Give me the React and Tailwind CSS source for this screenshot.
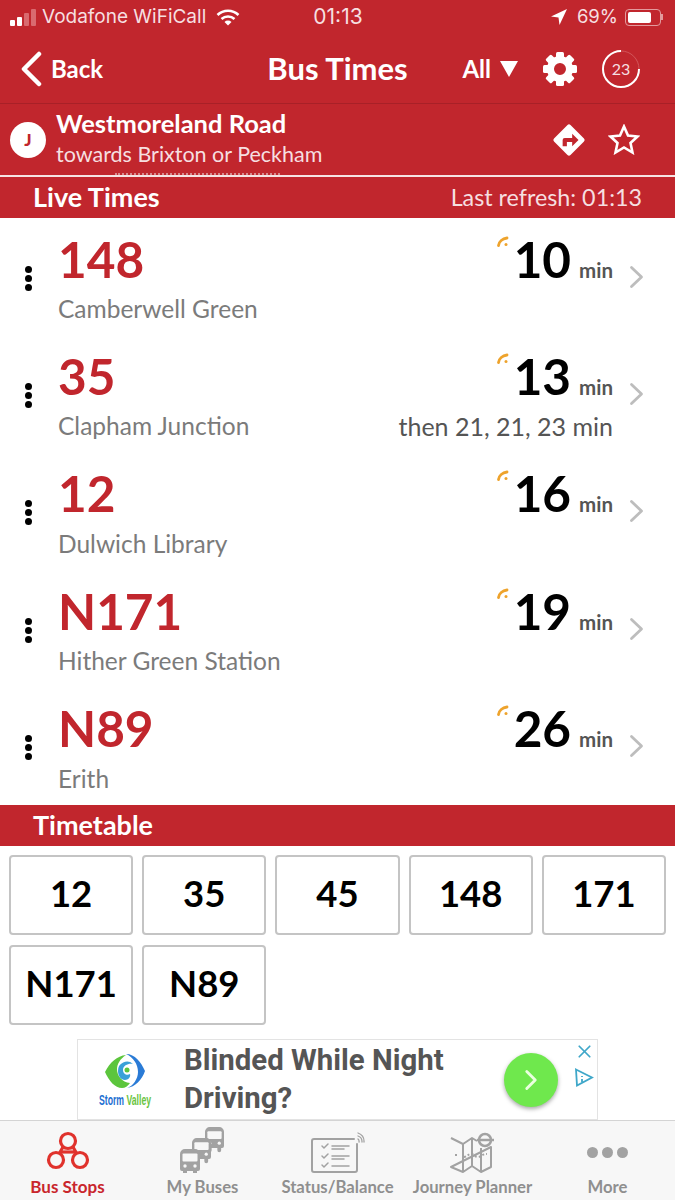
import { ChevronRight, X } from "lucide-react"

const departures = [
    { route: "148", dest: "Camberwell Green", mins: "10" },
    { route: "35", dest: "Clapham Junction", mins: "13", then: "then 21, 21, 23 min" },
    { route: "12", dest: "Dulwich Library", mins: "16" },
    { route: "N171", dest: "Hither Green Station", mins: "19" },
    { route: "N89", dest: "Erith", mins: "26" },
]

const routes = ["12", "35", "45", "148", "171", "N171", "N89"]

function Gear() {
    const teeth = [0, 45, 90, 135, 180, 225, 270, 315]
    return (
        <svg width="36" height="36" viewBox="0 0 36 36">
            {teeth.map(a => <rect key={a} x="14" y="1" width="8" height="8" rx="1.5" fill="white" transform={`rotate(${a} 18 18)`} />)}
            <circle cx="18" cy="18" r="9.5" fill="none" stroke="white" strokeWidth="7" />
        </svg>
    )
}

function Signal() {
    return (
        <svg width="12" height="12" viewBox="0 0 12 12" fill="none" stroke="#eea32c" strokeLinecap="round">
            <path d="M1.500 9.500C2 5.500 5.500 2.500 10 2" strokeWidth="2.800" />
            <circle cx="9" cy="8.500" r="1.500" fill="#eea32c" stroke="none" />
        </svg>
    )
}

function BusStopsIcon() {
    return (
        <svg width="44" height="42" viewBox="0 0 44 42" fill="none" stroke="#e0322c" strokeWidth="3.2">
            <path d="M15 21h14" />
            <path d="M17 16l-4 7M27 16l4 7" />
            <circle cx="22" cy="10" r="7.5" />
            <circle cx="10" cy="29" r="7.5" />
            <circle cx="34" cy="29" r="7.5" />
        </svg>
    )
}

function Bus({ x, y, s }) {
    return (
        <g transform={`translate(${x} ${y}) scale(${s})`}>
            <path d="M0 5a5 5 0 0 1 5-5h10a5 5 0 0 1 5 5v15a2 2 0 0 1-2 2h-1v2.500a2 2 0 0 1-4 0V22H7v2.500a2 2 0 0 1-4 0V22H2a2 2 0 0 1-2-2z" fill="#a2a2a2" />
            <rect x="2.500" y="4.500" width="15" height="8" rx="1" fill="#f7f7f7" />
            <circle cx="5" cy="17" r="1.700" fill="#f7f7f7" />
            <circle cx="15" cy="17" r="1.700" fill="#f7f7f7" />
        </g>
    )
}

function BusesIcon() {
    return (
        <svg width="46" height="46" viewBox="0 0 46 46">
            <Bus x="25" y="0" s="0.95" />
            <Bus x="12" y="11" s="0.95" />
            <Bus x="0" y="22" s="1" />
        </svg>
    )
}

function StatusIcon() {
    return (
        <svg width="54" height="42" viewBox="0 0 54 42" fill="none" stroke="#a2a2a2" strokeLinecap="round">
            <path d="M43 8H3a2 2 0 0 0-2 2v29a2 2 0 0 0 2 2h41a2 2 0 0 0 2-2V13" strokeWidth="2" />
            <path d="M11 15l2 2 4-4M11 25l2 2 4-4M11 34l2 2 4-4" strokeWidth="1.500" />
            <path d="M21 15h17M21 18h12M21 25h17M21 28h12M21 35h17" strokeWidth="1.500" />
            <path d="M47 8a3 3 0 0 1 1 3M47 5a6 6 0 0 1 4 6M47 2a9 9 0 0 1 6 9" strokeWidth="1.300" />
        </svg>
    )
}

function MapIcon() {
    return (
        <svg width="46" height="42" viewBox="0 0 46 42" fill="none" stroke="#a2a2a2" strokeWidth="2">
            <path d="M1 7l12 6 9-6 5 3M41 16v20l-10 5-9-6-9 6-12-5z" strokeLinejoin="round" />
            <path d="M13 13v28M22 7v28M31 17v24" />
            <path d="M5 24h4M14 26c3 0 4-3 7-3s4 3 7 3 4-3 9-3" strokeDasharray="2 2" />
            <circle cx="35" cy="9" r="6" strokeWidth="2.500" />
            <path d="M27 9h17" strokeWidth="2.500" />
        </svg>
    )
}

function MoreIcon() {
    return (
        <div className="flex gap-[4px] h-[42px] items-center pt-[2px]">
            <div className="w-[11px] h-[11px] rounded-full bg-[#a2a2a2]"></div>
            <div className="w-[11px] h-[11px] rounded-full bg-[#a2a2a2]"></div>
            <div className="w-[11px] h-[11px] rounded-full bg-[#a2a2a2]"></div>
        </div>
    )
}

const tabs = [
    { label: "Bus Stops", icon: <BusStopsIcon />, active: true },
    { label: "My Buses", icon: <BusesIcon /> },
    { label: "Status/Balance", icon: <StatusIcon /> },
    { label: "Journey Planner", icon: <MapIcon /> },
    { label: "More", icon: <MoreIcon /> },
]

function StatusBar() {
    return (
        <div className="h-[34px] pl-[10px] pr-[12px] grid grid-cols-[1fr_auto_1fr] items-center text-[#f6dfe0] font-['Inter',sans-serif]">
            <div className="flex items-center">
                <div className="flex items-end gap-[2px] h-[17px] mr-[6px]">
                    <div className="w-[5px] h-[6px] rounded-[1px] bg-white"></div>
                    <div className="w-[5px] h-[9px] rounded-[1px] bg-white"></div>
                    <div className="w-[5px] h-[13px] rounded-[1px] bg-[#d96a6f]"></div>
                    <div className="w-[5px] h-[17px] rounded-[1px] bg-[#d96a6f]"></div>
                </div>
                <span className="text-[19px] whitespace-nowrap">Vodafone WiFiCall</span>
                <svg className="ml-[10px]" width="24" height="17" viewBox="0 0 24 17" fill="none" stroke="white" strokeWidth="2.600">
                    <path d="M1.500 6a15 15 0 0 1 21 0M5.500 10a9.500 9.500 0 0 1 13 0" />
                    <path d="M12 16.500l-3.500-3.500a5 5 0 0 1 7 0z" fill="white" stroke="none" />
                </svg>
            </div>
            <span className="text-[21px] ml-[3px]">01:13</span>
            <div className="flex items-center justify-end">
                <svg width="16" height="16" viewBox="0 0 16 16"><path d="M16 0L0 7.500l7.500 1 1 7.500z" fill="white" /></svg>
                <span className="ml-[10px] text-[18.500px]">69%</span>
                <div className="ml-[7px] w-[36px] h-[17px] rounded-[4px] border border-[#e39a9d] p-[2px]">
                    <div className="w-[23px] h-full rounded-[2px] bg-white"></div>
                </div>
                <div className="w-[2px] h-[6px] bg-[#e39a9d]"></div>
            </div>
        </div>
    )
}

function NavBar() {
    return (
        <div className="h-[70px] grid grid-cols-[1fr_auto_1fr] items-center border-b border-[#a82027] font-['Lato',sans-serif] text-white">
            <div className="flex items-center pl-[20px]">
                <svg width="23" height="36" viewBox="0 0 23 36" fill="none" stroke="white" strokeWidth="4.500" strokeLinecap="round" strokeLinejoin="round">
                    <path d="M19 3L4 18l15 15" />
                </svg>
                <span className="ml-[8px] text-[24px] font-bold pt-[1px]">Back</span>
            </div>
            <span className="text-[31px] font-bold -mt-[1px]">Bus Times</span>
            <div className="flex items-center justify-end pr-[35px]">
                <span className="text-[24px] font-bold">All</span>
                <div className="ml-[9px] w-0 h-0 border-l-[9px] border-r-[9px] border-t-[16px] border-l-transparent border-r-transparent border-t-white"></div>
                <div className="ml-[24px]"><Gear /></div>
                <div className="relative ml-[24px] w-[38px] h-[38px] flex items-center justify-center">
                    <svg className="absolute inset-0" width="38" height="38" viewBox="0 0 38 38" fill="none">
                        <circle cx="19" cy="19" r="18" stroke="#d2555a" strokeWidth="1" />
                        <path d="M19 1A18 18 0 1 0 37 19" stroke="white" strokeWidth="2" />
                    </svg>
                    <span className="text-[16px] text-[#f6dfe0]">23</span>
                </div>
            </div>
        </div>
    )
}

function StopHeader() {
    return (
        <div className="h-[71px] flex items-center pl-[10px] pr-[35px] text-white font-['Lato',sans-serif]">
            <div className="w-[36px] h-[36px] rounded-full bg-white flex items-center justify-center text-[#c1262d] text-[17px] font-black">J</div>
            <div className="ml-[10px] flex-1">
                <p className="text-[25.500px] font-bold leading-[32px] -mt-[3px]">Westmoreland Road</p>
                <p className="text-[21.500px] leading-[30px] text-[#f6dfe0]">towards Brixton or Peckham</p>
            </div>
            <svg className="mr-[-1px]" width="36" height="36" viewBox="0 0 34 34">
                <rect x="6" y="6" width="22" height="22" rx="2" fill="white" transform="rotate(45 17 17)" />
                <path d="M11 23v-6a2 2 0 0 1 2-2h7v-4l6 6-6 6v-4h-5v4z" fill="#c1262d" />
            </svg>
            <svg className="ml-[22px]" width="32" height="31" viewBox="0 0 32 31" fill="none" stroke="white" strokeWidth="2.600" strokeLinejoin="miter">
                <path d="M16 2.500l4 9 9.500 1-7 6.500 2 9.500-8.500-5-8.500 5 2-9.500-7-6.500 9.500-1z" />
            </svg>
        </div>
    )
}

function Divider() {
    return (
        <div className="relative h-[2px] bg-[#f6e3e3]">
            <div className="absolute left-[115px] top-[-2px] w-[165px] h-[2px] border-t-2 border-dotted border-[#d98a8e]"></div>
        </div>
    )
}

function SectionBar({ title, right }) {
    return (
        <div className="h-[41px] bg-[#c1262d] flex items-center justify-between pl-[33px] pr-[33px] font-['Lato',sans-serif] text-white">
            <span className="text-[27px] font-bold">{title}</span>
            {right && <span className="text-[23.300px] text-[#f6dfe0]">{right}</span>}
        </div>
    )
}

function DepartureRow({ item }) {
    return (
        <div className="h-[117.4px] flex items-start pl-[25px] pr-[33px] pt-[15.5px] font-['Lato',sans-serif]">
            <div className="mt-[32px] w-[7px] flex flex-col gap-[2px] shrink-0">
                <div className="w-[7px] h-[7px] rounded-full bg-black"></div>
                <div className="w-[7px] h-[7px] rounded-full bg-black"></div>
                <div className="w-[7px] h-[7px] rounded-full bg-black"></div>
            </div>
            <div className="ml-[26px] flex-1">
                <p className="text-[49.500px] leading-[50px] font-bold text-[#c1262d]">{item.route}</p>
                <p className="mt-[10.500px] text-[24.500px] leading-[30px] text-[#7b7b7b]">{item.dest}</p>
            </div>
            <div className="flex flex-col items-end">
                <div className="flex items-baseline h-[50px]">
                    <div className="self-start mt-[2px] mr-[5px]"><Signal /></div>
                    <span className="text-[49.500px] leading-[50px] font-bold text-black">{item.mins}</span>
                    <span className="ml-[8px] text-[20.500px] font-bold text-[#555]">min</span>
                </div>
                {item.then && <p className="mt-[10.500px] text-[25px] leading-[30px] text-[#555]">{item.then}</p>}
            </div>
            <svg className="mt-[31px] ml-[16px] mr-[-2px]" width="15" height="24" viewBox="0 0 15 24" fill="none" stroke="#bdbdbd" strokeWidth="2.800" strokeLinecap="round" strokeLinejoin="round">
                <path d="M2.500 2.500l10 9.500-10 9.500" />
            </svg>
        </div>
    )
}

function Timetable() {
    return (
        <div className="grid grid-cols-5 gap-x-[9px] gap-y-[10px] px-[9px] pt-[9px] font-['Lato',sans-serif]">
            {routes.map(r => (
                <div key={r} className="h-[80px] pb-[3px] rounded-[4px] border-2 border-[#c4c4c4] flex items-center justify-center text-[36.500px] font-bold text-black">{r}</div>
            ))}
        </div>
    )
}

function Ad() {
    return (
        <div className="mt-[14px] mx-[77px] h-[81px] border border-[#e3e3e3] flex items-center relative">
            <div className="w-[94px] flex flex-col items-center pt-[2px]">
                <svg width="42" height="38" viewBox="0 0 42 38" fill="none">
                    <path d="M1 19C6 9 13 3 22 2c-6 4-9 9-9 14 0 7 5 13 13 14-2 3-5 5-8 5-7 0-13-7-17-16z" fill="#5cc53c" />
                    <path d="M22 1c9 0 15 8 19 17-3 9-10 16-18 17 6-2 11-9 11-16 0-8-5-15-12-18z" fill="#2a7bd6" />
                    <path d="M14 18a9 9 0 0 1 15-7c-4-1-10 1-10 6 0 4 4 6 7 4 1 3-2 6-5 6-4 0-7-4-7-9z" fill="#3aa0d8" />
                    <circle cx="23" cy="17" r="2.500" fill="#5cc53c" />
                </svg>
                <p className="mt-[2px] text-[14px] font-bold leading-[14px] font-['Liberation_Sans',sans-serif] whitespace-nowrap scale-x-[0.62]">
                    <span className="text-[#1d6fd1]">Storm </span><span className="text-[#69c440]">Valley</span>
                </p>
            </div>
            <p className="ml-[12px] w-[300px] text-[29.400px] leading-[38px] font-bold text-[#555] font-['Roboto',sans-serif]">Blinded While Night Driving?</p>
            <div className="absolute left-[426px] top-[13px] w-[54px] h-[54px] rounded-full bg-[#6fe84d] shadow-[0_2px_4px_rgba(0,0,0,0.35)] flex items-center justify-center">
                <ChevronRight className="text-[#eaffdf]" size={34} strokeWidth={2} />
            </div>
            <X className="absolute right-[2px] top-[1px] text-[#3fa7c9]" size={21} strokeWidth={2} />
            <svg className="absolute right-[3px] top-[28px]" width="20" height="20" viewBox="0 0 20 20" fill="none" stroke="#3fa7c9" strokeWidth="1.800">
                <path d="M2 1.500l16 8-15 8z" />
                <path d="M8 8v1M8 11v3" />
            </svg>
        </div>
    )
}

function TabBar() {
    return (
        <div className="h-[80px] grid grid-cols-5 bg-[#f7f7f7] border-t border-[#d4d4d4] font-['Lato',sans-serif]">
            {tabs.map(tab => (
                <div key={tab.label} className="flex flex-col items-center">
                    <div className="h-[54px] flex items-end justify-center pb-[2px]">{tab.icon}</div>
                    <span className={`whitespace-nowrap font-bold leading-[24px] ${tab.active ? "text-[17px] text-[#c9262c]" : "text-[16.700px] text-[#8f8f8f]"}`}>{tab.label}</span>
                </div>
            ))}
        </div>
    )
}

export default function App() {
    return (
        <div className="w-[675px] h-[1200px] overflow-hidden bg-white flex flex-col">
            <div className="bg-[#c1262d]">
                <StatusBar />
                <NavBar />
                <StopHeader />
            </div>
            <Divider />
            <SectionBar title="Live Times" right="Last refresh: 01:13" />
            <div>
                {departures.map(item => <DepartureRow key={item.route} item={item} />)}
            </div>
            <SectionBar title="Timetable" />
            <Timetable />
            <Ad />
            <TabBar />
        </div>
    )
}
